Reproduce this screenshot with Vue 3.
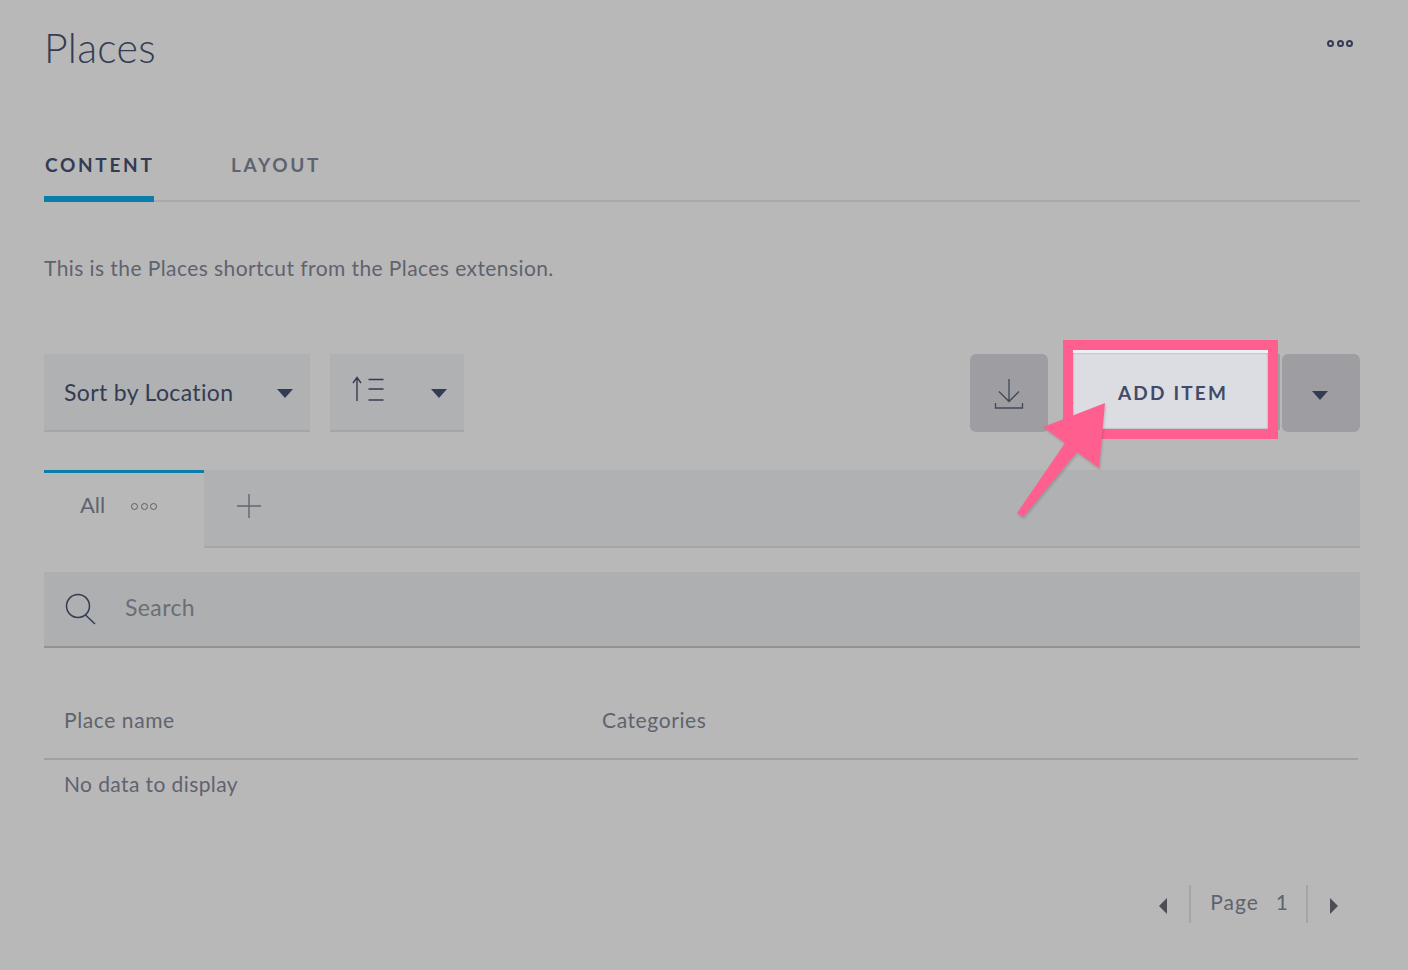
<script setup>
import { ref } from 'vue'

const columns = ref([
  { label: 'Place name', width: '538px' },
  { label: 'Categories', width: 'auto' }
])
</script>

<template>
  <div class="page">
    <header class="head">
      <h1>Places</h1>
      <span class="dots dots-dark"><i></i><i></i><i></i></span>
    </header>

    <nav class="tabs">
      <a class="tab active">CONTENT</a>
      <a class="tab">LAYOUT</a>
    </nav>

    <p class="intro">This is the Places shortcut from the Places extension.</p>

    <div class="toolbar">
      <div class="select sort">
        <span>Sort by Location</span>
        <b class="caret"></b>
      </div>
      <div class="select order">
        <svg width="34" height="26" viewBox="0 0 34 26" fill="none" stroke="#343c53" stroke-width="1.4">
          <path d="M7 25V1.500M3 7l4-5.500L11 7" />
          <path d="M18.500 3.500h15M18.500 13h15M18.500 24h15" />
        </svg>
        <b class="caret"></b>
      </div>

      <div class="actions">
        <button class="btn-grey download">
          <svg width="30" height="32" viewBox="0 0 30 32" fill="none" stroke="#414859" stroke-width="1.3">
            <path d="M15 1v22M5 13.500 15 23.500 25 13.500" />
            <path d="M1.500 25v5h27v-5" />
          </svg>
        </button>
        <button class="add">ADD ITEM</button>
        <button class="btn-grey more"><b class="caret"></b></button>
      </div>
    </div>

    <div class="views">
      <div class="view active">
        <span>All</span>
        <span class="dots"><i></i><i></i><i></i></span>
      </div>
      <div class="view-rest">
        <svg class="plus" width="26" height="26" viewBox="0 0 26 26" stroke="#62666f" stroke-width="1.4">
          <path d="M13 1v24M1 13h24" />
        </svg>
      </div>
    </div>

    <div class="search">
      <svg width="31" height="32" viewBox="0 0 31 32" fill="none" stroke="#343c53" stroke-width="1.5">
        <circle cx="13" cy="13" r="11.500" />
        <path d="M20.500 22 30 31" />
      </svg>
      <span>Search</span>
    </div>

    <div class="table-head">
      <span v-for="col in columns" :key="col.label" :style="{ width: col.width }">{{ col.label }}</span>
    </div>
    <div class="empty">No data to display</div>

    <div class="pager">
      <b class="arrow left"></b>
      <div class="page-num"><span>Page</span><span>1</span></div>
      <b class="arrow right"></b>
    </div>

    <svg class="pointer" width="100" height="125" viewBox="0 0 100 125">
      <path d="M65 0 3 24 25 40-23 110l6 4 54-65 22 16z" />
    </svg>
  </div>
</template>

<style>
html, body {
  margin: 0;
  background: #b8b8b8;
}
</style>

<style scoped>
.page {
  position: relative;
  box-sizing: border-box;
  width: 1408px;
  height: 970px;
  padding: 0 48px 0 44px;
  background: #b8b8b8;
  font-family: Lato, "Open Sans", sans-serif;
  color: #5f636e;
  overflow: hidden;
}

.head {
  display: flex;
  justify-content: space-between;
  height: 132px;
}

h1 {
  margin: 0;
  padding: 25px 0 0;
  font-size: 41px;
  line-height: 46px;
  font-weight: 300;
  letter-spacing: 0.3px;
  color: #343c53;
}

.dots {
  display: inline-flex;
  gap: 2.5px;
}

.dots i {
  box-sizing: border-box;
  width: 7px;
  height: 7px;
  border: 1.8px solid #5a5e69;
  border-radius: 50%;
}

.dots-dark {
  margin: 40px 7px 0 0;
  height: 7px;
}

.dots-dark i {
  border: 2px solid #343c53;
}

.tabs {
  display: flex;
  gap: 76px;
  box-sizing: border-box;
  height: 70px;
  border-bottom: 2px solid #a9a9a9;
}

.tab {
  position: relative;
  width: 110px;
  box-sizing: border-box;
  padding: 20px 0 0 1px;
  font-size: 19px;
  line-height: 26px;
  font-weight: 700;
  letter-spacing: 2.7px;
  color: #5f636e;
  white-space: nowrap;
}

.tab.active {
  color: #343c53;
  border-bottom: 6px solid #0a7ea8;
  height: 70px;
}

.intro {
  margin: 0;
  padding-top: 53px;
  height: 99px;
  font-size: 21px;
  line-height: 26px;
  letter-spacing: 0.42px;
}

.toolbar {
  display: flex;
  height: 78px;
}

.select {
  display: flex;
  align-items: center;
  justify-content: space-between;
  box-sizing: border-box;
  height: 78px;
  background: #b0b1b2;
  border-bottom: 2px solid #a5a6a7;
  font-size: 23px;
  color: #343c53;
}

.sort {
  width: 266px;
  padding: 0 17px 0 20px;
  letter-spacing: 0.36px;
}

.order {
  width: 134px;
  margin-left: 20px;
  padding: 0 17px 0 20px;
}

.order svg {
  margin-top: -6px;
}

.caret {
  display: block;
  width: 0;
  height: 0;
  margin-top: 3px;
  border-left: 8px solid transparent;
  border-right: 8px solid transparent;
  border-top: 9px solid #343c53;
}

.actions {
  display: flex;
  margin-left: auto;
}

.btn-grey {
  display: flex;
  align-items: center;
  justify-content: center;
  width: 78px;
  height: 78px;
  padding: 0;
  border: 0;
  border-radius: 6px;
  background: #9e9ea2;
}

.download svg {
  margin-top: 2px;
}

.more {
  padding-right: 2px;
}

.more .caret {
  margin-top: 5px;
}

.add {
  position: relative;
  box-sizing: border-box;
  width: 195px;
  height: 79px;
  margin: -4px 14px 0 25px;
  padding: 2px 0 0 5px;
  border: 0;
  border-top: 3px solid #eeeff2;
  background: #dcdde3;
  outline: 10px solid #ff5f8f;
  box-shadow: inset 0 0 2px rgba(0, 0, 0, 0.35);
  font-family: inherit;
  font-size: 19px;
  font-weight: 700;
  letter-spacing: 2.2px;
  color: #414b68;
}

/* sliver of the real button showing past the highlight */
.add::after {
  content: '';
  position: absolute;
  top: 1px;
  left: calc(100% + 10px);
  width: 2px;
  height: 76px;
  background: #9e9ea2;
}

.views {
  display: flex;
  height: 78px;
  margin-top: 38px;
}

.view {
  display: flex;
  align-items: center;
  gap: 26px;
  box-sizing: border-box;
  width: 160px;
  padding: 0 0 12px 36px;
  border-top: 3px solid #0a7ea8;
  font-size: 22px;
  color: #5f636e;
}

.view .dots {
  margin-top: 3px;
}

.view-rest {
  flex: 1;
  display: flex;
  align-items: center;
  box-sizing: border-box;
  padding: 0 0 4px 32px;
  background: #b0b1b2;
  border-bottom: 2px solid #a5a6a7;
}

.search {
  display: flex;
  align-items: center;
  box-sizing: border-box;
  height: 76px;
  margin-top: 24px;
  padding-left: 21px;
  background: #aeafb0;
  border-bottom: 2px solid #919293;
  font-size: 23px;
  letter-spacing: 0.4px;
  color: #6b6e75;
}

.search span {
  margin: -4px 0 0 29px;
}

.table-head {
  display: flex;
  box-sizing: border-box;
  width: 1314px;
  height: 112px;
  padding: 59px 0 0 20px;
  border-bottom: 2px solid #a0a0a1;
  font-size: 21px;
  line-height: 26px;
  letter-spacing: 0.6px;
}

.empty {
  padding: 11px 0 0 20px;
  font-size: 21px;
  line-height: 26px;
  letter-spacing: 0.4px;
}

.pager {
  position: absolute;
  top: 885px;
  right: 70px;
  display: flex;
  align-items: center;
  height: 38px;
}

.page-num {
  display: flex;
  gap: 17px;
  align-items: center;
  box-sizing: border-box;
  height: 38px;
  margin: 0 22px;
  padding: 0 17px 6px 19px;
  border-left: 2px solid #a5a5a5;
  border-right: 2px solid #a5a5a5;
  font-size: 21px;
  letter-spacing: 1px;
}

.arrow {
  display: block;
  width: 0;
  height: 0;
  margin-top: 3px;
  border-top: 8px solid transparent;
  border-bottom: 8px solid transparent;
}

.arrow.left {
  border-right: 8px solid #4c4e53;
}

.arrow.right {
  border-left: 8px solid #4c4e53;
}

/* annotation arrow over the add button */
.pointer {
  position: absolute;
  left: 1040px;
  top: 403px;
  overflow: visible;
  fill: #ff5f8f;
  filter: drop-shadow(1px 2px 1px rgba(0, 0, 0, 0.15));
}
</style>
